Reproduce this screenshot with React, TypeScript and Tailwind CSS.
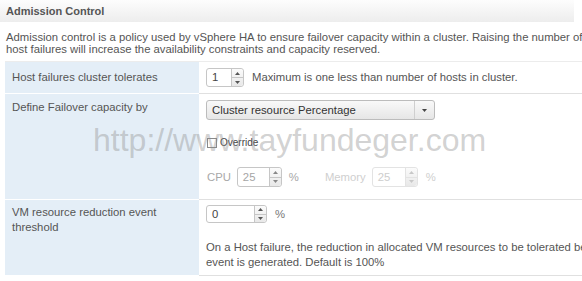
import type { ReactNode } from 'react'

type Tone = 'normal' | 'dim' | 'faint'

function Arrow({ up, color }: { up?: boolean; color: string }) {
    return (
        <svg width="5" height="3" viewBox="0 0 5 3">
            <path d={up ? 'M2.5 0L5 3H0z' : 'M0 0h5L2.5 3z'} fill={color} />
        </svg>
    )
}

function Spin({ value, className, tone = 'normal' }: { value: string; className: string; tone?: Tone }) {
    const text = tone === 'normal' ? 'text-[#444]' : tone === 'dim' ? 'text-[#a5a5a5]' : 'text-[#cdcdcd]'
    const border = tone === 'faint' ? 'border-[#e3e3e3]' : 'border-[#c6c6c6]'
    const arrow = tone === 'normal' ? '#555' : tone === 'dim' ? '#888' : '#c8c8c8'
    return (
        <div className={`flex shrink-0 rounded-[3px] border bg-white ${border} ${className}`}>
            <div className={`flex flex-1 items-center pl-[5px] text-[11.3px] ${text}`}>{value}</div>
            <div className={`flex w-[12px] flex-col rounded-r-[3px] border-l bg-gradient-to-b from-[#fbfbfb] to-[#e8e8e8] ${border}`}>
                <div className={`flex flex-1 items-center justify-center border-b ${border}`}>
                    <Arrow up color={arrow} />
                </div>
                <div className="flex flex-1 items-center justify-center">
                    <Arrow color={arrow} />
                </div>
            </div>
        </div>
    )
}

function Row({ label, children, labelClass }: { label: ReactNode; children: ReactNode; labelClass: string }) {
    return (
        <div className="flex">
            <div className={`w-[194px] shrink-0 border-b border-white bg-[#e4eef7] pl-[7px] pr-2 text-[11.3px] leading-[15px] text-[#555] ${labelClass}`}>
                {label}
            </div>
            <div className="min-w-0 flex-1 border-b border-[#e0e0e0] pl-[7px]">{children}</div>
        </div>
    )
}

export default function App() {
    return (
        <div
            className="relative h-[281px] w-[582px] overflow-hidden bg-white text-[#555]"
            style={{ fontFamily: '"Liberation Sans", Arial, sans-serif' }}
        >
            {/* ── Header ── */}
            <div className="mr-[8px] flex h-[22px] items-center bg-gradient-to-b from-[#fdfdfd] to-[#ededed] pl-[6px] text-[11px] font-bold text-[#555]">
                Admission Control
            </div>

            {/* ── Description ── */}
            <div className="whitespace-nowrap pl-[6px] pt-[9px] text-[11.3px] leading-[12px] text-[#555]">
                <p>Admission control is a policy used by vSphere HA to ensure failover capacity within a cluster. Raising the number of</p>
                <p>host failures will increase the availability constraints and capacity reserved.</p>
            </div>

            {/* ── Settings table ── */}
            <div className="ml-[5px] mt-[6px] border-t border-[#ececec]">
                <Row label="Host failures cluster tolerates" labelClass="flex h-[32px] items-center">
                    <div className="flex h-[31px] items-center gap-[8px]">
                        <Spin value="1" className="h-[19px] w-[38px]" />
                        <span className="whitespace-nowrap text-[11.3px] text-[#555]">
                            Maximum is one less than number of hosts in cluster.
                        </span>
                    </div>
                </Row>

                <Row label="Define Failover capacity by" labelClass="pt-[6px]">
                    <div className="flex h-[105px] flex-col pt-[6px]">
                        <div className="flex h-[20px] w-[229px] rounded-[3px] border border-[#bcbcbc] bg-gradient-to-b from-[#f9f9f9] to-[#e6e6e6]">
                            <div className="flex flex-1 items-center pl-[5px] text-[11.3px] text-[#333]">
                                Cluster resource Percentage
                            </div>
                            <div className="flex w-[20px] items-center justify-center border-l border-[#cfcfcf]">
                                <svg width="5" height="3" viewBox="0 0 5 3">
                                    <path d="M0 0h5L2.5 3z" fill="#444" />
                                </svg>
                            </div>
                        </div>

                        <div className="ml-[1px] mt-[18px] flex h-[10px] items-center gap-[3px]">
                            <span className="h-[10px] w-[10px] border border-[#8a8a8a] bg-white" />
                            <span className="text-[10px] leading-none text-[#444]">Override</span>
                        </div>

                        <div className="mt-[19px] flex items-center text-[11.3px]">
                            <span className="ml-[1px] text-[#a8a8a8]">CPU</span>
                            <Spin value="25" tone="dim" className="ml-[6px] h-[20px] w-[45px]" />
                            <span className="ml-[7px] text-[#a8a8a8]">%</span>
                            <span className="ml-[26px] text-[#cfcfcf]">Memory</span>
                            <Spin value="25" tone="faint" className="ml-[6px] h-[20px] w-[46px]" />
                            <span className="ml-[8px] text-[#cfcfcf]">%</span>
                        </div>
                    </div>
                </Row>

                <Row
                    label={
                        <>
                            VM resource reduction event
                            <br />
                            threshold
                        </>
                    }
                    labelClass="pt-[5px]"
                >
                    <div className="flex h-[75px] flex-col pt-[5px]">
                        <div className="flex items-center gap-[8px]">
                            <Spin value="0" className="h-[18px] w-[61px]" />
                            <span className="text-[11.3px] text-[#777]">%</span>
                        </div>
                        <div className="mt-[17px] whitespace-nowrap text-[11.3px] leading-[15px] text-[#555]">
                            <p>On a Host failure, the reduction in allocated VM resources to be tolerated before a warning</p>
                            <p>event is generated. Default is 100%</p>
                        </div>
                    </div>
                </Row>
            </div>

            {/* Watermark */}
            <div className="pointer-events-none absolute left-[93px] top-[124px] whitespace-nowrap text-[32px] leading-none text-[#8c8c8c]/40">
                http://www.tayfundeger.com
            </div>
        </div>
    )
}
